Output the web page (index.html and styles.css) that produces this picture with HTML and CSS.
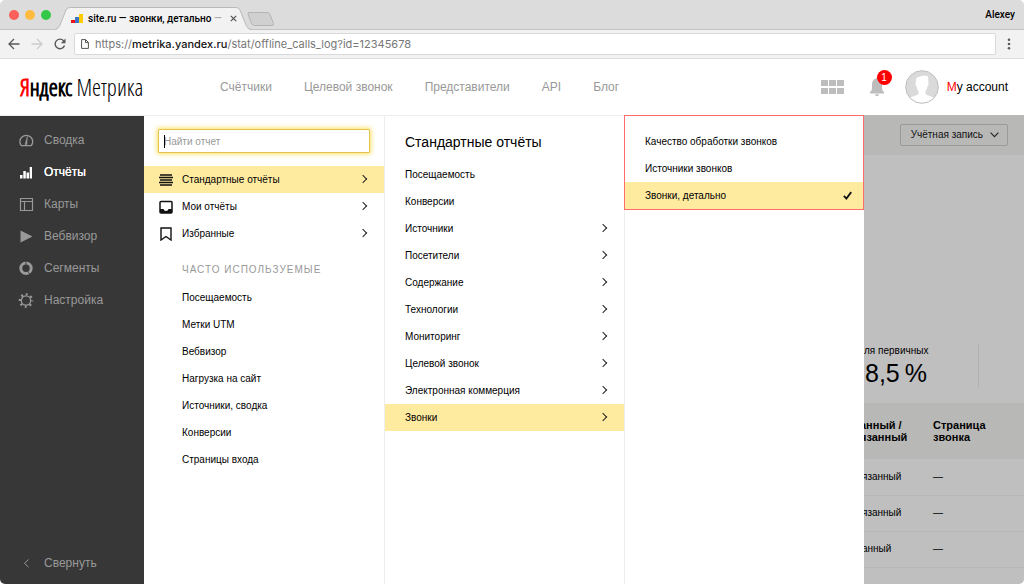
FILE: index.html
```html
<!DOCTYPE html>
<html lang="ru">
<head>
<meta charset="utf-8">
<title>site.ru — звонки, детально</title>
<link rel="stylesheet" href="styles.css">
</head>
<body>
<div class="window">
  <div class="tabstrip">
    <div class="lights"><span class="light red"></span><span class="light amber"></span><span class="light green"></span></div>
    <div class="tab">
      <svg class="tab-shape" width="196" height="23" viewBox="0 0 196 23" aria-hidden="true"><path d="M0 23C3 22.500 4 20 5 18L11 3Q12 .5 15 .5H181Q184 .5 185 3L191 18C192 20 193 22.500 196 23Z" fill="#f2f2f2"/><path d="M0 22.500C3 22 4 20 5 18L11 3Q12 .5 15 .5H181Q184 .5 185 3L191 18C192 20 193 22 196 22.500" fill="none" stroke="#b9b9b9"/></svg>
      <svg width="12" height="12" viewBox="0 0 12 12" aria-hidden="true"><path d="M0 7h4v3H0z" fill="#e11"/><path d="M4 4h4v6H4z" fill="#3f73c8"/><path d="M8 1h4v9H8z" fill="#fc0"/></svg>
      <span class="tab-title">site.ru — звонки, детально <span class="fade">—</span></span>
      <button class="plain" aria-label="Закрыть вкладку"><svg width="7" height="7" viewBox="0 0 7 7"><path d="M.8.8l5.400 5.400M6.200.8L.8 6.200" stroke="#555" stroke-width="1.200"/></svg></button>
    </div>
    <button class="plain new-tab" aria-label="Новая вкладка"><svg width="28" height="14" viewBox="0 0 28 14"><path d="M2 .5H20Q22 .5 23 2.500L26.500 11.500Q27 13.500 25 13.500H7.500Q5.500 13.500 4.500 11.500L1 2Q.5.500 2 .5Z" fill="#d0d0d0" stroke="#b4b4b4"/></svg></button>
    <span class="profile">Alexey</span>
  </div>
  <div class="toolbar">
    <button class="plain" aria-label="Назад"><svg width="12" height="12" viewBox="0 0 12 12"><path d="M11.500 6H1.200M6 1L1 6l5 5" fill="none" stroke="#5a5a5a" stroke-width="1.300"/></svg></button>
    <button class="plain" aria-label="Вперёд"><svg width="12" height="12" viewBox="0 0 12 12"><path d="M.5 6h10.300M6 1l5 5-5 5" fill="none" stroke="#ccc" stroke-width="1.300"/></svg></button>
    <button class="plain" aria-label="Обновить"><svg width="12" height="12" viewBox="0 0 12 12"><path d="M10.500 7.500A4.800 4.800 0 1 1 9.400 2.600L10.500 4" fill="none" stroke="#5a5a5a" stroke-width="1.400"/><path d="M11.500.5v4.700H6.800z" fill="#5a5a5a"/></svg></button>
    <div class="address">
      <svg width="8" height="10" viewBox="0 0 8 10" aria-hidden="true"><path d="M.6.6h4l2.800 2.800v6H.6zM4.500.6v3h3" fill="none" stroke="#555"/></svg>
      <div class="url" role="textbox" contenteditable="true" spellcheck="false" aria-label="Адрес">https://<b>metrika.yandex.ru</b>/stat/offline_calls_log?id=12345678</div>
    </div>
    <button class="plain more" aria-label="Меню"><svg width="4" height="12" viewBox="0 0 4 12" fill="#5a5a5a"><circle cx="2" cy="1.700" r="1.300"/><circle cx="2" cy="6" r="1.300"/><circle cx="2" cy="10.300" r="1.300"/></svg></button>
  </div>

  <header class="header">
    <a class="logo" href="#"><b><i>Я</i>ндекс</b> Метрика</a>
    <nav class="topnav">
      <a href="#">Счётчики</a><a href="#">Целевой звонок</a><a href="#">Представители</a><a href="#">API</a><a href="#">Блог</a>
    </nav>
    <div class="account">
      <button class="plain" aria-label="Сервисы"><svg width="24" height="16" viewBox="0 0 24 16"><path d="M0 1h7v6H0zM8 1h7v6H8zM16 1h7v6h-7zM0 9h7v6H0zM8 9h7v6H8zM16 9h7v6h-7z" fill="#bdbdbd"/></svg></button>
      <button class="plain bell" aria-label="Уведомления"><svg width="16" height="20" viewBox="0 0 16 20"><path d="M7 1.500a1 1 0 0 1 2 0C12 2.300 13 4.500 13 7.500v4q0 2 2 3.500v1.500H1V15q2-1.500 2-3.500v-4C3 4.500 4 2.300 7 1.500ZM6 17.300h4q-.3 2-2 2t-2-2Z" fill="#bdbdbd"/></svg><span class="badge">1</span></button>
      <a class="user" href="#"><svg width="34" height="34" viewBox="0 0 34 34" aria-hidden="true"><defs><clipPath id="face"><circle cx="17" cy="17" r="16"/></clipPath></defs><circle cx="17" cy="17" r="16" fill="#dadada"/><g clip-path="url(#face)" fill="#fff"><path d="M11 12c-.5-4 1-5.500 3-5 2-1.500 6-1.500 8.500-1 1 2 1 4 .7 6.500.8 1.500.3 3-.7 4-.5 2-1.200 3.500-2 4.500v3c2.500 2 7.500 2 9.500 5L31 34H3l1-5c2-3 7-3 9.500-5v-3c-1-1-1.700-2.500-2-4.500-1-1-1.500-3-.5-4.500Z"/></g><circle cx="17" cy="17" r="16.300" fill="none" stroke="#bbb"/></svg><span><i>M</i>y account</span></a>
    </div>
  </header>

  <div class="body">
    <aside class="sidebar">
      <nav>
        <a href="#"><svg viewBox="0 0 16 16"><path d="M3.300 13.700A6.400 6.400 0 1 1 13.300 13.700Z" fill="none" stroke="currentColor" stroke-width="1.300" stroke-linejoin="round"/><path d="M9.300 4.500L7 12.500h2z" fill="currentColor" stroke="currentColor" stroke-width=".5"/></svg>Сводка</a>
        <a href="#" class="current"><svg viewBox="0 0 16 16" fill="currentColor"><path d="M2 11h2.500v3.500H2zM5.300 7h2.500v7.500H5.300zM8.500 8.500H11v6H8.500zM11.700 3H14v11.500h-2.300z"/></svg>Отчёты</a>
        <a href="#"><svg viewBox="0 0 16 16" fill="none" stroke="currentColor"><path d="M2.500 2.500h12v12h-12zM2.500 5.500h12M6.500 5.500v9" stroke-width="1.200"/></svg>Карты</a>
        <a href="#"><svg viewBox="0 0 16 16"><path d="M2.500 2.500l12 6-12 6z" fill="currentColor"/></svg>Вебвизор</a>
        <a href="#"><svg viewBox="0 0 16 16"><circle cx="8" cy="8.300" r="5.200" fill="none" stroke="currentColor" stroke-width="3"/><path d="M8 .5v5M9.500 11l3 4" stroke="#373737" stroke-width=".8"/></svg>Сегменты</a>
        <a href="#"><svg viewBox="0 0 16 16" fill="none" stroke="currentColor"><circle cx="8" cy="8.500" r="4.700" stroke-width="1.300"/><circle cx="8" cy="8.500" r="6.200" stroke-width="2.200" stroke-dasharray="2 2.870" stroke-dashoffset="1"/></svg>Настройка</a>
      </nav>
      <button class="plain collapse"><svg viewBox="0 0 16 16"><path d="M10.500 4.500L6.500 8.300l4 3.800" fill="none" stroke="currentColor"/></svg>Свернуть</button>
    </aside>

    <main class="report">
      <div class="filters"><button class="scope">Учётная запись<svg width="9" height="6" viewBox="0 0 9 6"><path d="M.6.7l3.900 4 3.900-4" fill="none" stroke="#222" stroke-width="1.100"/></svg></button></div>
      <div class="metric"><span>ля первичных</span><strong>8,5&#8201;%</strong></div>
      <table class="calls">
        <thead><tr><th>анный /<br>язанный</th><th>Страница<br>звонка</th></tr></thead>
        <tbody><tr><td>язанный</td><td>—</td></tr><tr><td>язанный</td><td>—</td></tr><tr><td>анный</td><td>—</td></tr></tbody>
      </table>
    </main>

    <div class="menu">
      <section class="column">
        <div class="search"><input type="search" placeholder="Найти отчет" aria-label="Найти отчет"><span class="caret"></span></div>
        <ul class="list icons">
          <li><a href="#" class="active"><svg viewBox="0 0 14 14"><path d="M1 2h12M0 4.500h14M1 7h12M0 9.500h14M1 12h12" stroke="#111" stroke-width="1.400"/></svg>Стандартные отчёты<span class="go"></span></a></li>
          <li><a href="#"><svg viewBox="0 0 14 14"><rect x="1" y="1.500" width="12" height="11.500" rx="1" fill="none" stroke="#111" stroke-width="1.500"/><path d="M1 9h3.500q.5 2 2.500 2t2.500-2H13v4H1z" fill="#111"/></svg>Мои отчёты<span class="go"></span></a></li>
          <li><a href="#"><svg viewBox="0 0 14 14"><path d="M2 1h10v12L7 9.500 2 13z" fill="none" stroke="#111" stroke-width="1.400"/></svg>Избранные<span class="go"></span></a></li>
        </ul>
        <h2 class="caption">Часто используемые</h2>
        <ul class="list frequent">
          <li><a href="#">Посещаемость</a></li>
          <li><a href="#">Метки UTM</a></li>
          <li><a href="#">Вебвизор</a></li>
          <li><a href="#">Нагрузка на сайт</a></li>
          <li><a href="#">Источники, сводка</a></li>
          <li><a href="#">Конверсии</a></li>
          <li><a href="#">Страницы входа</a></li>
        </ul>
      </section>
      <section class="column">
        <h1 class="title">Стандартные отчёты</h1>
        <ul class="list">
          <li><a href="#">Посещаемость</a></li>
          <li><a href="#">Конверсии</a></li>
          <li><a href="#">Источники<span class="go"></span></a></li>
          <li><a href="#">Посетители<span class="go"></span></a></li>
          <li><a href="#">Содержание<span class="go"></span></a></li>
          <li><a href="#">Технологии<span class="go"></span></a></li>
          <li><a href="#">Мониторинг<span class="go"></span></a></li>
          <li><a href="#">Целевой звонок<span class="go"></span></a></li>
          <li><a href="#">Электронная коммерция<span class="go"></span></a></li>
          <li><a href="#" class="active">Звонки<span class="go"></span></a></li>
        </ul>
      </section>
      <section class="column">
        <ul class="list marked">
          <li><a href="#">Качество обработки звонков</a></li>
          <li><a href="#">Источники звонков</a></li>
          <li><a href="#" class="active">Звонки, детально<svg class="check" viewBox="0 0 8 8"><path d="M.8 4.300l2.200 2.400L7.300 1" fill="none" stroke="#111" stroke-width="1.600"/></svg></a></li>
        </ul>
      </section>
    </div>
  </div>
</div>
</body>
</html>
```
FILE: styles.css
```css
* { box-sizing: border-box; }
body { margin: 0; background: #fff; color: #000; font: 11px/16px "Liberation Sans", Arial, sans-serif; }
a { color: inherit; text-decoration: none; }
i { font-style: normal; color: #f00; }
ul { list-style: none; margin: 0; padding: 0; }
svg { display: block; flex: none; }
.plain { display: flex; align-items: center; border: 0; padding: 0; background: none; color: inherit; font: inherit; }
.window { display: flex; flex-direction: column; min-height: 100vh; border-radius: 5px; overflow: hidden; }

.tabstrip { display: flex; align-items: flex-end; height: 30px; padding: 0 9px; background: #dcdcdc; border-bottom: 1px solid #c3c3c3; font-family: Roboto, Inter, sans-serif; }
.lights { display: flex; gap: 6px; align-self: center; }
.light { width: 10px; height: 10px; border-radius: 50%; }
.red { background: #fc605b; }
.amber { background: #fdbc40; }
.green { background: #34c84a; }
.tab { position: relative; display: flex; align-items: center; width: 196px; height: 23px; margin: 0 -4px -1px 4px; padding: 0 14px 0 16px; gap: 5px; }
.tab > * { position: relative; }
.tab .tab-shape { position: absolute; inset: 0; }
.tab-title { flex: 1; white-space: nowrap; font-size: 10px; font-weight: 500; }
.fade { color: #aaa; }
.new-tab { align-self: center; padding-top: 8px; }
.profile { align-self: center; margin-left: auto; font-size: 10px; font-weight: 500; }

.toolbar { display: flex; align-items: center; gap: 11px; height: 29px; padding: 0 13px 0 8px; background: #f2f2f2; border-bottom: 1px solid #ddd; font: 11px/16px Inter, Roboto, sans-serif; }
.address { display: flex; flex: 1; align-items: center; gap: 6px; height: 22px; margin-left: -3px; padding: 0 6px; background: #fff; border: 1px solid #d9d9d9; border-radius: 2px; color: #777; }
.url b { color: #111; font-weight: 500; }

.header { display: flex; align-items: center; height: 57px; padding: 0 16px 0 20px; background: #fff; border-bottom: 1px solid #eee; font-size: 12px; }
.logo { width: 200px; white-space: nowrap; font: 300 23px/32px "Open Sans Condensed Light", "Liberation Sans Narrow", "Roboto Condensed", sans-serif; }
.logo b { font-weight: 300; -webkit-text-stroke: 1px; }
.topnav { display: flex; gap: 32px; color: #999; }
.account { display: flex; align-items: center; margin-left: auto; }
.bell { position: relative; margin-left: 24px; }
.badge { position: absolute; left: 8px; top: -7px; width: 15px; height: 15px; border-radius: 50%; background: #f00; color: #fff; font-size: 10px; line-height: 15px; text-align: center; }
.user { display: flex; align-items: center; gap: 8px; margin-left: 20px; }

.body { position: relative; display: flex; flex: 1; }
.sidebar { display: flex; flex-direction: column; justify-content: space-between; width: 144px; padding: 8px 0 5px; background: #373737; color: #999; font-size: 12px; }
.sidebar a, .collapse { display: flex; align-items: center; gap: 10px; height: 32px; padding-left: 18px; }
.sidebar svg { width: 16px; height: 16px; }
.sidebar .current { color: #fff; font-weight: 500; text-shadow: 0 0 #fff; }

.report { flex: 1; margin-top: -1px; background: #bfbfbf; }
.filters { display: flex; justify-content: flex-end; padding: 9px 16px; background: #b8b8b7; }
.scope { display: flex; align-items: center; gap: 7px; height: 22px; padding: 0 8px 0 10px; border: 1px solid #9a9a9a; border-radius: 2px; background: none; color: #111; font: 10px/16px "Liberation Sans", Arial, sans-serif; }
.metric { display: flex; flex-direction: column; width: 835px; margin-top: 188px; padding-left: 720px; border-right: 1px solid #b2b2b2; }
.metric span { font-size: 10px; }
.metric strong { padding-left: 1px; font-size: 25px; line-height: 29px; font-weight: 400; }
.calls { width: 100%; margin-top: 15px; border-collapse: collapse; line-height: 12px; text-align: left; }
.calls th { height: 56px; padding: 0; background: #b8b8b6; font-size: 11px; }
.calls td { height: 36px; padding: 0; border-bottom: 1px solid #b8b8b8; font-size: 10px; }
.calls th:first-child { width: 789px; padding-left: 716px; }
.calls td:first-child { padding-left: 718px; }

.menu { position: absolute; left: 144px; top: -1px; bottom: 0; display: grid; grid-template-columns: repeat(3, 240px); background: #fff; }
.column { border-top: 1px solid #eee; }
.column + .column { border-left: 1px solid #eee; }
.search { position: relative; margin: 13px 14px; }
.search input { display: block; width: 100%; height: 24px; padding: 0 5px; border: 1px solid #e3c34a; border-radius: 1px; outline: 0; background: #fff; box-shadow: 0 0 5px 1px #ffdf60; font: 10px/16px "Liberation Sans", Arial, sans-serif; }
.search input::placeholder { color: #999; }
.caret { position: absolute; left: 6px; top: 6px; width: 1px; height: 13px; background: #000; }
.list a { display: flex; align-items: center; height: 27px; padding: 0 16px 0 20px; font-size: 10px; }
.icons a { gap: 9px; padding-left: 15px; }
.icons svg { width: 14px; height: 14px; }
.frequent a { padding-left: 38px; }
.active { background: #ffeba0; }
.go { width: 6px; height: 6px; margin: 0 2px 2px auto; border: solid #222; border-width: 1px 1px 0 0; transform: rotate(45deg); }
.caption { margin: 15px 0 6px 38px; color: #999; font-size: 10px; line-height: 16px; font-weight: 400; letter-spacing: 1px; text-transform: uppercase; }
.title { margin: 16px 20px 9px; font-size: 14px; line-height: 20px; font-weight: 400; }
.marked { margin: -1px 0 0 -1px; padding-top: 12px; border: 1px solid #ff6b6b; }
.marked a { padding-right: 11px; }
.check { width: 9px; height: 9px; margin-left: auto; }
```
